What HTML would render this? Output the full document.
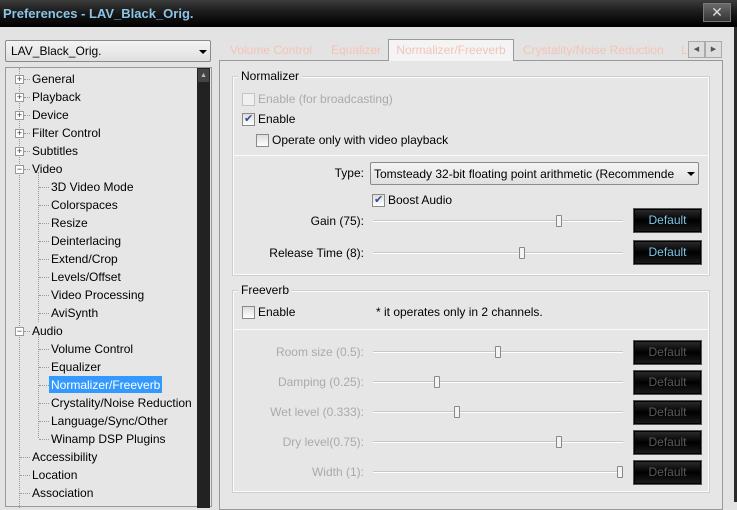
<!DOCTYPE html><html><head><style>
*{margin:0;padding:0;box-sizing:border-box}
body{width:737px;height:502px;overflow:hidden;background:#e3e3e3;font-family:"Liberation Sans",sans-serif;font-size:12px;color:#000;position:relative}
.a{position:absolute;white-space:nowrap}
.title{left:0;top:0;width:737px;height:27px;background:linear-gradient(#3c3c3c,#1a1a1a 45%,#000);}
.title span{position:absolute;left:3px;top:6px;color:#8cc4e4;font-size:13px;font-weight:bold}
.close{left:703px;top:3px;width:28px;height:19px;border:1px solid #777;background:linear-gradient(#6a6a6a,#333);color:#ddd;text-align:center;font-size:14px;line-height:17px}
.combo{border:1px solid #8a8a8a;border-radius:2px;background:linear-gradient(#f4f4f4,#e0e0e0)}
.arr{width:0;height:0;border-left:4px solid transparent;border-right:4px solid transparent;border-top:4px solid #000}
.tree{left:5px;top:67px;width:207px;height:440px;border:1px solid #999;background:#e6e6e6}
.sb{left:197px;top:68px;width:13px;height:440px;background:#222}
.t{position:absolute;height:18px;line-height:18px}
.pm{position:absolute;width:9px;height:9px;border:1px solid #999;background:#fff;font-size:9px;line-height:7px;text-align:center;color:#333}
.vl{position:absolute;border-left:1px dotted #999;width:0}
.hl{position:absolute;border-top:1px dotted #999;height:0}
.tab{top:40px;height:20px;line-height:20px;color:#f3c4b4;font-size:12px}
.pane{left:219px;top:60px;width:504px;height:450px;border:1px solid #999;background:#e6e6e6}
.grp{border:1px solid #fafafa;outline:1px solid #cfcfcf}
.cb{position:absolute;width:13px;height:13px;border:1px solid #8a8a8a;background:linear-gradient(#ddd,#fff)}
.ck::after{content:"✔";position:absolute;left:1px;top:-2px;font-size:11px;color:#334a9a}
.track{position:absolute;left:373px;width:250px;height:2px;background:#c8c8c8;border-bottom:1px solid #fff}
.th{position:absolute;width:6px;height:12px;border:1px solid #888;background:#f4f4f4;border-radius:1px}
.btn{position:absolute;left:634px;width:67px;height:23px;background:linear-gradient(#2a2a2a,#000 50%,#1a1a1a);border:1px solid #000;outline:1px solid #555;color:#7cc6e6;text-align:center;line-height:21px}
.dis{color:#5a5a5a}
.lbl{position:absolute;text-align:right;width:150px;left:214px}
.g{color:#aaa}
</style></head><body>
<div class="a title"><span>Preferences - LAV_Black_Orig.</span></div>
<div class="a close">✕</div>
<div class="a combo" style="left:5px;top:40px;width:206px;height:22px"><span class="a" style="left:5px;top:3px;font-size:12px">LAV_Black_Orig.</span><div class="a arr" style="left:193px;top:9px"></div></div>
<div class="a tree">
<div class="vl" style="left:13px;top:0;height:440px"></div>
<div class="vl" style="left:32px;top:104px;height:150px"></div>
<div class="vl" style="left:32px;top:266px;height:104px"></div>
<div class="hl" style="left:18px;top:11px;width:6px"></div><div class="hl" style="left:18px;top:29px;width:6px"></div><div class="hl" style="left:18px;top:47px;width:6px"></div><div class="hl" style="left:18px;top:65px;width:6px"></div><div class="hl" style="left:18px;top:83px;width:6px"></div><div class="hl" style="left:18px;top:101px;width:6px"></div><div class="hl" style="left:18px;top:263px;width:6px"></div><div class="hl" style="left:14px;top:389px;width:10px"></div><div class="hl" style="left:14px;top:407px;width:10px"></div><div class="hl" style="left:14px;top:425px;width:10px"></div>
<div class="hl" style="left:33px;top:119px;width:10px"></div><div class="hl" style="left:33px;top:137px;width:10px"></div><div class="hl" style="left:33px;top:155px;width:10px"></div><div class="hl" style="left:33px;top:173px;width:10px"></div><div class="hl" style="left:33px;top:191px;width:10px"></div><div class="hl" style="left:33px;top:209px;width:10px"></div><div class="hl" style="left:33px;top:227px;width:10px"></div><div class="hl" style="left:33px;top:245px;width:10px"></div>
<div class="hl" style="left:33px;top:281px;width:10px"></div><div class="hl" style="left:33px;top:299px;width:10px"></div><div class="hl" style="left:33px;top:317px;width:10px"></div><div class="hl" style="left:33px;top:335px;width:10px"></div><div class="hl" style="left:33px;top:353px;width:10px"></div><div class="hl" style="left:33px;top:371px;width:10px"></div>
<div class="pm" style="left:9px;top:7px">+</div><div class="t" style="left:26px;top:2px">General</div>
<div class="pm" style="left:9px;top:25px">+</div><div class="t" style="left:26px;top:20px">Playback</div>
<div class="pm" style="left:9px;top:43px">+</div><div class="t" style="left:26px;top:38px">Device</div>
<div class="pm" style="left:9px;top:61px">+</div><div class="t" style="left:26px;top:56px">Filter Control</div>
<div class="pm" style="left:9px;top:79px">+</div><div class="t" style="left:26px;top:74px">Subtitles</div>
<div class="pm" style="left:9px;top:97px">−</div><div class="t" style="left:26px;top:92px">Video</div>
<div class="t" style="left:45px;top:110px">3D Video Mode</div>
<div class="t" style="left:45px;top:128px">Colorspaces</div>
<div class="t" style="left:45px;top:146px">Resize</div>
<div class="t" style="left:45px;top:164px">Deinterlacing</div>
<div class="t" style="left:45px;top:182px">Extend/Crop</div>
<div class="t" style="left:45px;top:200px">Levels/Offset</div>
<div class="t" style="left:45px;top:218px">Video Processing</div>
<div class="t" style="left:45px;top:236px">AviSynth</div>
<div class="pm" style="left:9px;top:259px">−</div><div class="t" style="left:26px;top:254px">Audio</div>
<div class="t" style="left:45px;top:272px">Volume Control</div>
<div class="t" style="left:45px;top:290px">Equalizer</div>
<div class="t" style="left:43px;top:308px;background:#3399ff;color:#fff;padding:0 2px;height:17px">Normalizer/Freeverb</div>
<div class="t" style="left:45px;top:326px">Crystality/Noise Reduction</div>
<div class="t" style="left:45px;top:344px">Language/Sync/Other</div>
<div class="t" style="left:45px;top:362px">Winamp DSP Plugins</div>
<div class="t" style="left:26px;top:380px">Accessibility</div>
<div class="t" style="left:26px;top:398px">Location</div>
<div class="t" style="left:26px;top:416px">Association</div>
</div>
<div class="a sb"><div class="a" style="left:1px;top:1px;width:11px;height:13px;background:#444;color:#bbb;font-size:7px;text-align:center;line-height:13px">▲</div></div>
<div class="a tab" style="left:230px">Volume Control</div>
<div class="a tab" style="left:331px">Equalizer</div>
<div class="a tab" style="left:388px;top:39px;width:126px;height:22px;background:#f4f4f4;border:1px solid #999;border-bottom:none;text-align:center;z-index:2">Normalizer/Freeverb</div>
<div class="a tab" style="left:523px">Crystality/Noise Reduction</div>
<div class="a tab" style="left:681px">L</div>
<div class="a" style="left:688px;top:41px;width:17px;height:17px;border:1px solid #aaa;background:#ddd;font-size:7px;text-align:center;line-height:15px;color:#555">◀</div>
<div class="a" style="left:705px;top:41px;width:17px;height:17px;border:1px solid #aaa;background:#ddd;font-size:7px;text-align:center;line-height:15px;color:#555">▶</div>
<div class="a pane"></div>
<div class="a grp" style="left:233px;top:77px;width:476px;height:198px"></div>
<div class="a" style="left:238px;top:69px;background:#e6e6e6;padding:0 3px">Normalizer</div>
<div class="cb" style="left:242px;top:93px;border-color:#c4c4c4;background:#f0f0f0"></div><div class="a g" style="left:258px;top:92px">Enable (for broadcasting)</div>
<div class="cb ck" style="left:242px;top:113px"></div><div class="a" style="left:258px;top:112px">Enable</div>
<div class="cb" style="left:256px;top:134px"></div><div class="a" style="left:272px;top:133px">Operate only with video playback</div>
<div class="a" style="left:234px;top:155px;width:474px;height:1px;background:#ccc;border-bottom:1px solid #fafafa"></div>
<div class="lbl" style="top:166px">Type:</div>
<div class="a combo" style="left:370px;top:162px;width:329px;height:23px"><span class="a" style="left:3px;top:4px">Tomsteady 32-bit floating point arithmetic (Recommende</span><div class="a arr" style="left:316px;top:9px"></div></div>
<div class="cb ck" style="left:372px;top:194px"></div><div class="a" style="left:388px;top:193px">Boost Audio</div>
<div class="lbl" style="top:214px">Gain (75):</div><div class="track" style="top:220px"></div><div class="th" style="left:556px;top:215px"></div><div class="btn" style="top:209px">Default</div>
<div class="lbl" style="top:246px">Release Time (8):</div><div class="track" style="top:252px"></div><div class="th" style="left:519px;top:247px"></div><div class="btn" style="top:241px">Default</div>
<div class="a grp" style="left:233px;top:291px;width:476px;height:201px"></div>
<div class="a" style="left:238px;top:283px;background:#e6e6e6;padding:0 3px">Freeverb</div>
<div class="cb" style="left:242px;top:306px"></div><div class="a" style="left:258px;top:305px">Enable</div>
<div class="a" style="left:376px;top:305px">* it operates only in 2 channels.</div>
<div class="a" style="left:234px;top:329px;width:474px;height:1px;background:#ccc;border-bottom:1px solid #fafafa"></div>
<div class="lbl g" style="top:345px">Room size (0.5):</div><div class="track" style="top:351px"></div><div class="th" style="left:495px;top:346px"></div><div class="btn dis" style="top:341px">Default</div>
<div class="lbl g" style="top:375px">Damping (0.25):</div><div class="track" style="top:381px"></div><div class="th" style="left:434px;top:376px"></div><div class="btn dis" style="top:371px">Default</div>
<div class="lbl g" style="top:405px">Wet level (0.333):</div><div class="track" style="top:411px"></div><div class="th" style="left:454px;top:406px"></div><div class="btn dis" style="top:401px">Default</div>
<div class="lbl g" style="top:435px">Dry level(0.75):</div><div class="track" style="top:441px"></div><div class="th" style="left:556px;top:436px"></div><div class="btn dis" style="top:431px">Default</div>
<div class="lbl g" style="top:465px">Width (1):</div><div class="track" style="top:471px"></div><div class="th" style="left:617px;top:466px"></div><div class="btn dis" style="top:461px">Default</div>
<div class="a" style="left:734px;top:27px;width:3px;height:475px;background:#2a2a2a"></div>
</body></html>
